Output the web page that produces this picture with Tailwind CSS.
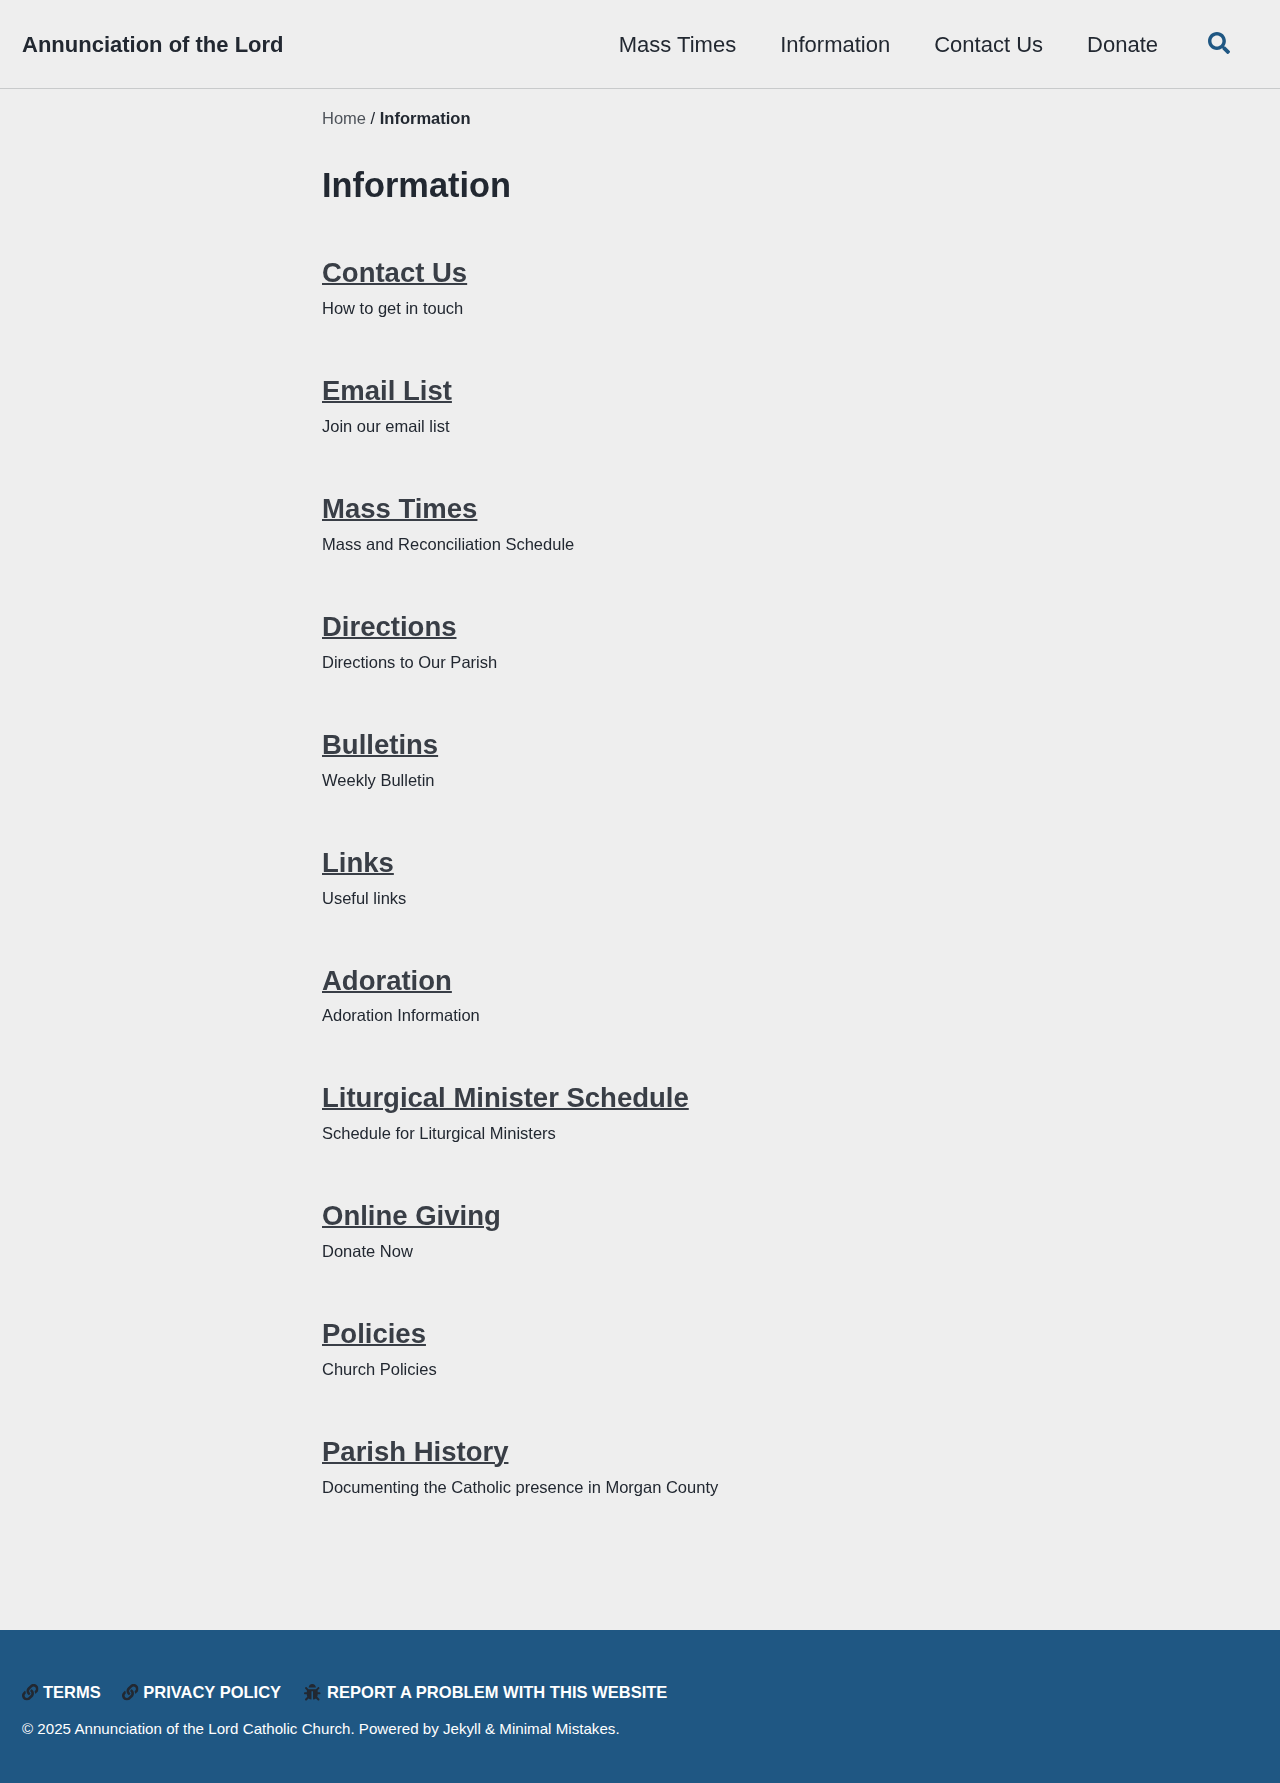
<!DOCTYPE html>
<html lang="en">
<head>
<meta charset="utf-8">
<title>Information - Annunciation of the Lord</title>
<script src="https://cdn.jsdelivr.net/npm/@tailwindcss/browser@4"></script>
</head>
<body class="flex min-h-screen flex-col bg-[#eeeeee] font-['Liberation_Sans',Arial,sans-serif] text-[16.5px] leading-[24.75px] text-[#222831]">
<svg class="hidden">
  <symbol id="link" viewBox="0 0 512 512"><path d="M326.612 185.391c59.747 59.809 58.927 155.698.36 214.59-.11.12-.24.25-.36.37l-67.2 67.2c-59.27 59.27-155.699 59.262-214.96 0-59.27-59.26-59.27-155.7 0-214.96l37.106-37.106c9.84-9.84 26.786-3.3 27.294 10.606.648 17.722 3.826 35.527 9.69 52.721 1.986 5.822.567 12.262-3.783 16.612l-13.087 13.087c-28.026 28.026-28.905 73.66-1.155 101.96 28.024 28.579 74.086 28.749 102.325.51l67.2-67.19c28.191-28.191 28.073-73.757 0-101.83-3.701-3.694-7.429-6.564-10.341-8.569a16.037 16.037 0 0 1-6.947-12.606c-.396-10.567 3.348-21.456 11.698-29.806l21.054-21.055c5.521-5.521 14.182-6.199 20.584-1.731a152.482 152.482 0 0 1 20.522 17.197zM467.547 44.449c-59.261-59.262-155.69-59.27-214.96 0l-67.2 67.2c-.12.12-.25.25-.36.37-58.566 58.892-59.387 154.781.36 214.59a152.454 152.454 0 0 0 20.521 17.196c6.402 4.468 15.064 3.789 20.584-1.731l21.054-21.055c8.35-8.35 12.094-19.239 11.698-29.806a16.037 16.037 0 0 0-6.947-12.606c-2.912-2.005-6.64-4.875-10.341-8.569-28.073-28.073-28.191-73.639 0-101.83l67.2-67.19c28.239-28.239 74.3-28.069 102.325.51 27.75 28.3 26.872 73.934-1.155 101.96l-13.087 13.087c-4.35 4.35-5.769 10.79-3.783 16.612 5.864 17.194 9.042 34.999 9.69 52.721.509 13.906 17.454 20.446 27.294 10.606l37.106-37.106c59.271-59.259 59.271-155.699.001-214.959z"/></symbol>
</svg>
<header class="flex h-[89px] shrink-0 items-center border-b border-[#c8cacb] pl-[22px] pr-[50px] text-[22px] leading-[33px] will-change-[opacity]">
  <a href="#" class="mr-auto font-bold">Annunciation of the Lord</a>
  <nav class="flex items-center gap-11">
    <a href="#">Mass Times</a>
    <a href="#">Information</a>
    <a href="#">Contact Us</a>
    <a href="#">Donate</a>
  </nav>
  <button class="mb-[2px] ml-[50px]" aria-label="Search"><svg class="size-[22px] fill-[#1f5783]" viewBox="0 0 512 512"><path d="M505 442.7L405.3 343c-4.5-4.5-10.6-7-17-7H372c27.6-35.3 44-79.7 44-128C416 93.1 322.9 0 208 0S0 93.1 0 208s93.1 208 208 208c48.3 0 92.7-16.4 128-44v16.3c0 6.4 2.5 12.5 7 17l99.7 99.7c9.4 9.4 24.6 9.4 33.9 0l28.3-28.3c9.4-9.4 9.4-24.6.1-34zM208 336c-70.7 0-128-57.2-128-128 0-70.7 57.2-128 128-128 70.7 0 128 57.2 128 128 0 70.7-57.2 128-128 128z"/></svg></button>
</header>
<main class="grow pl-[322px] will-change-[opacity]">
  <nav class="pt-[17px]"><a href="#" class="text-[#4e535a]">Home</a> / <strong>Information</strong></nav>
  <h1 class="mt-[34px] text-[34.375px] leading-[41.25px] font-bold">Information</h1>
  <div id="items" class="pt-[50.3px]">
    <article class="h-[117.88px]"><h2 class="mb-[6.85px] text-[27.5px] leading-[33px] font-bold text-[#393e46]"><a href="#" class="underline decoration-2 underline-offset-1">Contact Us</a></h2><p>How to get in touch</p></article>
    <article class="h-[117.88px]"><h2 class="mb-[6.85px] text-[27.5px] leading-[33px] font-bold text-[#393e46]"><a href="#" class="underline decoration-2 underline-offset-1">Email List</a></h2><p>Join our email list</p></article>
    <article class="h-[117.88px]"><h2 class="mb-[6.85px] text-[27.5px] leading-[33px] font-bold text-[#393e46]"><a href="#" class="underline decoration-2 underline-offset-1">Mass Times</a></h2><p>Mass and Reconciliation Schedule</p></article>
    <article class="h-[117.88px]"><h2 class="mb-[6.85px] text-[27.5px] leading-[33px] font-bold text-[#393e46]"><a href="#" class="underline decoration-2 underline-offset-1">Directions</a></h2><p>Directions to Our Parish</p></article>
    <article class="h-[117.88px]"><h2 class="mb-[6.85px] text-[27.5px] leading-[33px] font-bold text-[#393e46]"><a href="#" class="underline decoration-2 underline-offset-1">Bulletins</a></h2><p>Weekly Bulletin</p></article>
    <article class="h-[117.88px]"><h2 class="mb-[6.85px] text-[27.5px] leading-[33px] font-bold text-[#393e46]"><a href="#" class="underline decoration-2 underline-offset-1">Links</a></h2><p>Useful links</p></article>
    <article class="h-[117.88px]"><h2 class="mb-[6.85px] text-[27.5px] leading-[33px] font-bold text-[#393e46]"><a href="#" class="underline decoration-2 underline-offset-1">Adoration</a></h2><p>Adoration Information</p></article>
    <article class="h-[117.88px]"><h2 class="mb-[6.85px] text-[27.5px] leading-[33px] font-bold text-[#393e46]"><a href="#" class="underline decoration-2 underline-offset-1">Liturgical Minister Schedule</a></h2><p>Schedule for Liturgical Ministers</p></article>
    <article class="h-[117.88px]"><h2 class="mb-[6.85px] text-[27.5px] leading-[33px] font-bold text-[#393e46]"><a href="#" class="underline decoration-2 underline-offset-1">Online Giving</a></h2><p>Donate Now</p></article>
    <article class="h-[117.88px]"><h2 class="mb-[6.85px] text-[27.5px] leading-[33px] font-bold text-[#393e46]"><a href="#" class="underline decoration-2 underline-offset-1">Policies</a></h2><p>Church Policies</p></article>
    <article class="h-[117.88px]"><h2 class="mb-[6.85px] text-[27.5px] leading-[33px] font-bold text-[#393e46]"><a href="#" class="underline decoration-2 underline-offset-1">Parish History</a></h2><p>Documenting the Catholic presence in Morgan County</p></article>
  </div>
</main>
<footer class="h-[153px] shrink-0 bg-[#1f5783] px-[22px] pt-[50px] text-white">
  <ul class="flex font-bold">
    <li class="mr-[21.5px] flex items-center"><svg class="mr-[4.5px] size-[16.5px] fill-[#222831]"><use href="#link"/></svg><a href="#">TERMS</a></li>
    <li class="mr-[23px] flex items-center"><svg class="mr-[4.5px] size-[16.5px] fill-[#222831]"><use href="#link"/></svg><a href="#">PRIVACY POLICY</a></li>
    <li class="flex items-center"><svg class="mr-[6.5px] size-[16.5px] fill-[#222831]" viewBox="0 0 512 512"><path d="M511.988 288.9c-.478 17.43-15.217 31.1-32.653 31.1H424v16c0 21.864-4.882 42.584-13.6 61.145l60.228 60.228c12.496 12.497 12.496 32.758 0 45.255-12.498 12.497-32.759 12.496-45.256 0l-54.736-54.736C345.886 467.965 314.351 480 280 480V236c0-6.627-5.373-12-12-12h-24c-6.627 0-12 5.373-12 12v244c-34.351 0-65.886-12.035-90.636-32.108l-54.736 54.736c-12.498 12.497-32.759 12.496-45.256 0-12.496-12.497-12.496-32.758 0-45.255l60.228-60.228C92.882 378.584 88 357.864 88 336v-16H32.666C15.23 320 .491 306.33.013 288.9-.484 270.816 14.028 256 32 256h56v-58.745l-46.628-46.628c-12.496-12.497-12.496-32.758 0-45.255 12.498-12.497 32.758-12.497 45.256 0L141.255 160h229.489l54.627-54.627c12.498-12.497 32.758-12.497 45.256 0 12.496 12.497 12.496 32.758 0 45.255L424 197.255V256h56c17.972 0 32.484 14.816 31.988 32.9zM257 0c-61.856 0-112 50.144-112 112h224C369 50.144 318.856 0 257 0z"/></svg><a href="#" class="tracking-[0.015px]">REPORT A PROBLEM WITH THIS WEBSITE</a></li>
  </ul>
  <p class="mt-[13px] text-[15.125px] leading-[22.7px] tracking-[0.013px]">© 2025 Annunciation of the Lord Catholic Church. Powered by Jekyll &amp; Minimal Mistakes.</p>
</footer>
</body>
</html>
